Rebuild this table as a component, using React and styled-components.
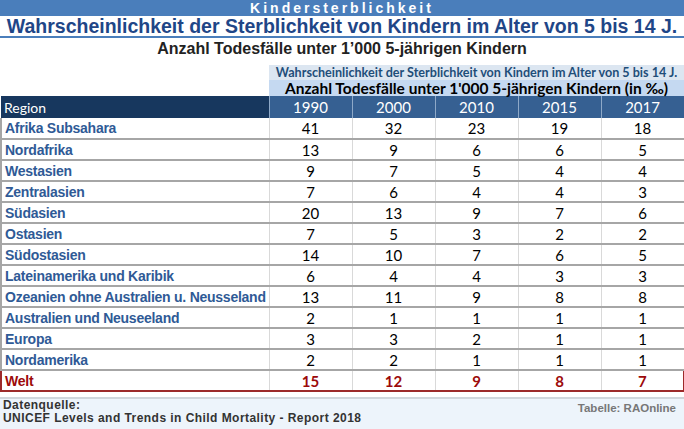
import styled, { createGlobalStyle } from 'styled-components';

const GlobalStyle = createGlobalStyle`
  html, body {
    margin: 0;
    padding: 0;
    background: #ffffff;
  }
  body {
    width: 684px;
    height: 429px;
    overflow: hidden;
    font-family: 'Liberation Sans', Arial, sans-serif;
  }
`;

const years = ['1990', '2000', '2010', '2015', '2017'];

const rows = [
  ['Afrika Subsahara', 41, 32, 23, 19, 18],
  ['Nordafrika', 13, 9, 6, 6, 5],
  ['Westasien', 9, 7, 5, 4, 4],
  ['Zentralasien', 7, 6, 4, 4, 3],
  ['Südasien', 20, 13, 9, 7, 6],
  ['Ostasien', 7, 5, 3, 2, 2],
  ['Südostasien', 14, 10, 7, 6, 5],
  ['Lateinamerika und Karibik', 6, 4, 4, 3, 3],
  ['Ozeanien ohne Australien u. Neusseland', 13, 11, 9, 8, 8],
  ['Australien und Neuseeland', 2, 1, 1, 1, 1],
  ['Europa', 3, 3, 2, 1, 1],
  ['Nordamerika', 2, 2, 1, 1, 1],
];

const world = ['Welt', 15, 12, 9, 8, 7];

function App() {
  return (
    <Page>
      <GlobalStyle />
      <TopBar>Kindersterblichkeit</TopBar>
      <Title>Wahrscheinlichkeit der Sterblichkeit von Kindern im Alter von 5 bis 14 J.</Title>
      <Subtitle>Anzahl Todesfälle unter 1’000 5-jährigen Kindern</Subtitle>
      <Table>
        <colgroup>
          <col style={{ width: 268 }} />
          {years.map((y) => (
            <col key={y} style={{ width: 83 }} />
          ))}
        </colgroup>
        <tbody>
          <CaptionRow>
            <td />
            <CaptionSmall colSpan={5}>
              Wahrscheinlichkeit der Sterblichkeit von Kindern im Alter von 5 bis 14 J.
            </CaptionSmall>
          </CaptionRow>
          <CaptionRow $big>
            <td />
            <CaptionBig colSpan={5}>Anzahl Todesfälle unter 1'000 5-jährigen Kindern (in ‰)</CaptionBig>
          </CaptionRow>
          <HeadRow>
            <RegionHead>Region</RegionHead>
            {years.map((y) => (
              <YearHead key={y}>{y}</YearHead>
            ))}
          </HeadRow>
          {rows.map((r) => (
            <DataRow key={r[0]}>
              <RegionCell>{r[0]}</RegionCell>
              {r.slice(1).map((v, i) => (
                <NumCell key={i}>{v}</NumCell>
              ))}
            </DataRow>
          ))}
          <DataRow $total>
            <RegionCell $total>{world[0]}</RegionCell>
            {world.slice(1).map((v, i) => (
              <NumCell key={i} $total>
                {v}
              </NumCell>
            ))}
          </DataRow>
        </tbody>
      </Table>
      <Footer>
        <Source>
          <div>Datenquelle:</div>
          <div>UNICEF Levels and Trends in Child Mortality - Report 2018</div>
        </Source>
        <Credit>Tabelle: RAOnline</Credit>
      </Footer>
    </Page>
  );
}

export default App;

const Page = styled.div`
  width: 684px;
  height: 429px;
  display: flex;
  flex-direction: column;
`;

const TopBar = styled.div`
  height: 16px;
  background: #4a7ebb;
  color: #ffffff;
  font-weight: bold;
  font-size: 14px;
  letter-spacing: 3px;
  line-height: 16px;
  text-align: center;
`;

const Title = styled.div`
  height: 20px;
  border-bottom: 2px solid #4a7ebb;
  color: #1f4687;
  font-weight: bold;
  font-size: 19.5px;
  line-height: 21px;
  text-align: center;
  white-space: nowrap;
`;

const Subtitle = styled.div`
  height: 27px;
  color: #222222;
  font-weight: bold;
  font-size: 16px;
  line-height: 22px;
  text-align: center;
`;

const Table = styled.table`
  width: 683px;
  border-collapse: collapse;
  table-layout: fixed;
  font-family: Lato, 'Open Sans', sans-serif;

  td {
    padding: 0;
  }
`;

const CaptionRow = styled.tr`
  height: ${(p) => (p.$big ? '16px' : '15px')};
`;

const CaptionSmall = styled.td`
  background: #dce6f1;
  color: #1f4e79;
  font-weight: bold;
  font-size: 12.6px;
  line-height: 15px;
  text-align: center;
  white-space: nowrap;
`;

const CaptionBig = styled.td`
  background: #c5d9f1;
  color: #000000;
  font-weight: bold;
  font-size: 15.5px;
  line-height: 16px;
  text-align: center;
  white-space: nowrap;
`;

const HeadRow = styled.tr`
  height: 22px;
`;

const RegionHead = styled.td`
  background: #17375e;
  color: #ffffff;
  font-size: 14px;
  padding-left: 3px !important;
  border-right: 1px solid #8ea9c8;
`;

const YearHead = styled.td`
  background: #366092;
  color: #ffffff;
  font-size: 15px;
  text-align: center;
  border-right: 1px solid #8ea9c8;
`;

const DataRow = styled.tr`
  height: 21px;
  border-bottom: 2px solid ${(p) => (p.$total ? '#9c2a2a' : '#a6a6a6')};
  border-top: ${(p) => (p.$total ? '2px solid #9c2a2a' : 'none')};
  border-left: 2px solid ${(p) => (p.$total ? '#9c2a2a' : '#a6a6a6')};
  border-right: ${(p) => (p.$total ? '2px solid #9c2a2a' : 'none')};
`;

const RegionCell = styled.td`
  font-family: 'Liberation Sans Narrow', 'Arial Narrow', 'Liberation Sans', sans-serif;
  font-weight: bold;
  font-size: 14px;
  letter-spacing: -0.25px;
  color: ${(p) => (p.$total ? '#9c0a0a' : '#2f5a96')};
  padding-left: 3px !important;
  white-space: nowrap;
  overflow: hidden;
  border-right: 1px solid #d9d9d9;
`;

const NumCell = styled.td`
  font-size: 15px;
  text-align: center;
  color: ${(p) => (p.$total ? '#9c0a0a' : '#000000')};
  font-weight: ${(p) => (p.$total ? 'bold' : 'normal')};
  border-right: 1px solid #d9d9d9;
`;

const Footer = styled.div`
  margin-top: 5px;
  flex: 1;
  display: flex;
  justify-content: space-between;
  align-items: flex-start;
  background: #edf4fb;
  border-top: 2px solid #d0d6dc;
  padding: 0 8px 0 3px;
  font-weight: bold;
`;

const Source = styled.div`
  color: #333333;
  font-size: 12px;
  letter-spacing: 0.45px;
  line-height: 13px;
`;

const Credit = styled.div`
  color: #777777;
  font-size: 11.5px;
  line-height: 13px;
  margin-top: 3px;
`;
